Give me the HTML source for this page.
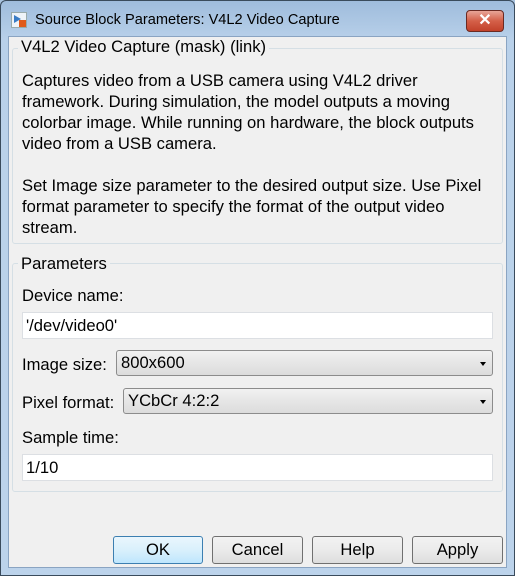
<!DOCTYPE html>
<html><head><style>
*{margin:0;padding:0;box-sizing:border-box}
body{width:515px;height:576px;overflow:hidden;background:#a9c3df;font-family:"Liberation Sans",sans-serif;font-size:16.6px;color:#000;position:relative}
.frame{position:absolute;left:0;top:0;width:515px;height:576px;border:1px solid #3a4b5c;border-radius:6px 6px 0 0;background:linear-gradient(#9fbcdc,#b9d1ea 40px,#bcd3eb)}
.client{position:absolute;left:8px;top:36px;width:499px;height:532px;background:#f0f0f0;border:1px solid #8aa4c2}
.abs{position:absolute;white-space:nowrap}
.grp{position:absolute;border:1px solid #d5dfe5;border-radius:3px}
.lbl{position:absolute;background:#f0f0f0;padding:0 3px}
.inp{position:absolute;background:#fff;border:1px solid #dcdfe3;height:27px;padding-left:3px;line-height:25px}
.cmb{position:absolute;border:1px solid #8c8c8c;border-radius:3px;background:linear-gradient(#f2f2f2,#e6e6e6 50%,#dcdcdc);height:26px;padding-left:4px;line-height:24px}
.cmb:after{content:"";position:absolute;right:6px;top:11px;border-left:3.5px solid transparent;border-right:3.5px solid transparent;border-top:4px solid #000}
.btn{position:absolute;top:536px;height:28px;border:1px solid #707070;border-radius:3px;background:linear-gradient(#f2f2f2,#ebebeb 50%,#dddddd);text-align:center;line-height:26px}
</style></head><body>
<div class="frame"></div>
<div class="abs" style="left:11px;top:12px;width:16px;height:16px">
<svg width="16" height="16"><rect x="0.5" y="0.5" width="15" height="15" fill="#eef3f8" stroke="#9aa"/><path d="M3 3 L10 7 L3 11Z" fill="#3a7cc4"/><rect x="8" y="8" width="7" height="7" fill="#e05a1a"/></svg></div>
<div class="abs" style="left:35px;top:12px;font-size:14.6px">Source Block Parameters: V4L2 Video Capture</div>
<div class="abs" style="left:466px;top:10px;width:38px;height:22px;border:1px solid #6b2a22;border-radius:4px;background:linear-gradient(#e8a598,#d45f48 50%,#c2412a);color:#fff;text-align:center;font-weight:bold;font-size:16px;line-height:20px">✕</div>
<div class="client"></div>
<div class="grp" style="left:12px;top:48px;width:491px;height:196px"></div>
<div class="lbl" style="left:18px;top:37px">V4L2 Video Capture (mask) (link)</div>
<div class="abs" style="left:22px;top:70px;line-height:21px">Captures video from a USB camera using V4L2 driver<br>framework. During simulation, the model outputs a moving<br>colorbar image. While running on hardware, the block outputs<br>video from a USB camera.<br><br>Set Image size parameter to the desired output size. Use Pixel<br>format parameter to specify the format of the output video<br>stream.</div>
<div class="grp" style="left:12px;top:263px;width:491px;height:229px"></div>
<div class="lbl" style="left:18px;top:254px">Parameters</div>
<div class="abs" style="left:22px;top:286px">Device name:</div>
<div class="inp" style="left:22px;top:312px;width:471px">'/dev/video0'</div>
<div class="abs" style="left:22px;top:355px">Image size:</div>
<div class="cmb" style="left:116px;top:350px;width:377px">800x600</div>
<div class="abs" style="left:22px;top:393px">Pixel format:</div>
<div class="cmb" style="left:123px;top:388px;width:370px">YCbCr 4:2:2</div>
<div class="abs" style="left:22px;top:428px">Sample time:</div>
<div class="inp" style="left:22px;top:454px;width:471px">1/10</div>
<div class="btn" style="left:113px;width:90px;border-color:#3c7fb1;background:linear-gradient(#eaf6fd,#d9f0fc 50%,#bee6fd)">OK</div>
<div class="btn" style="left:212px;width:91px">Cancel</div>
<div class="btn" style="left:312px;width:91px">Help</div>
<div class="btn" style="left:412px;width:91px">Apply</div>
</body></html>
